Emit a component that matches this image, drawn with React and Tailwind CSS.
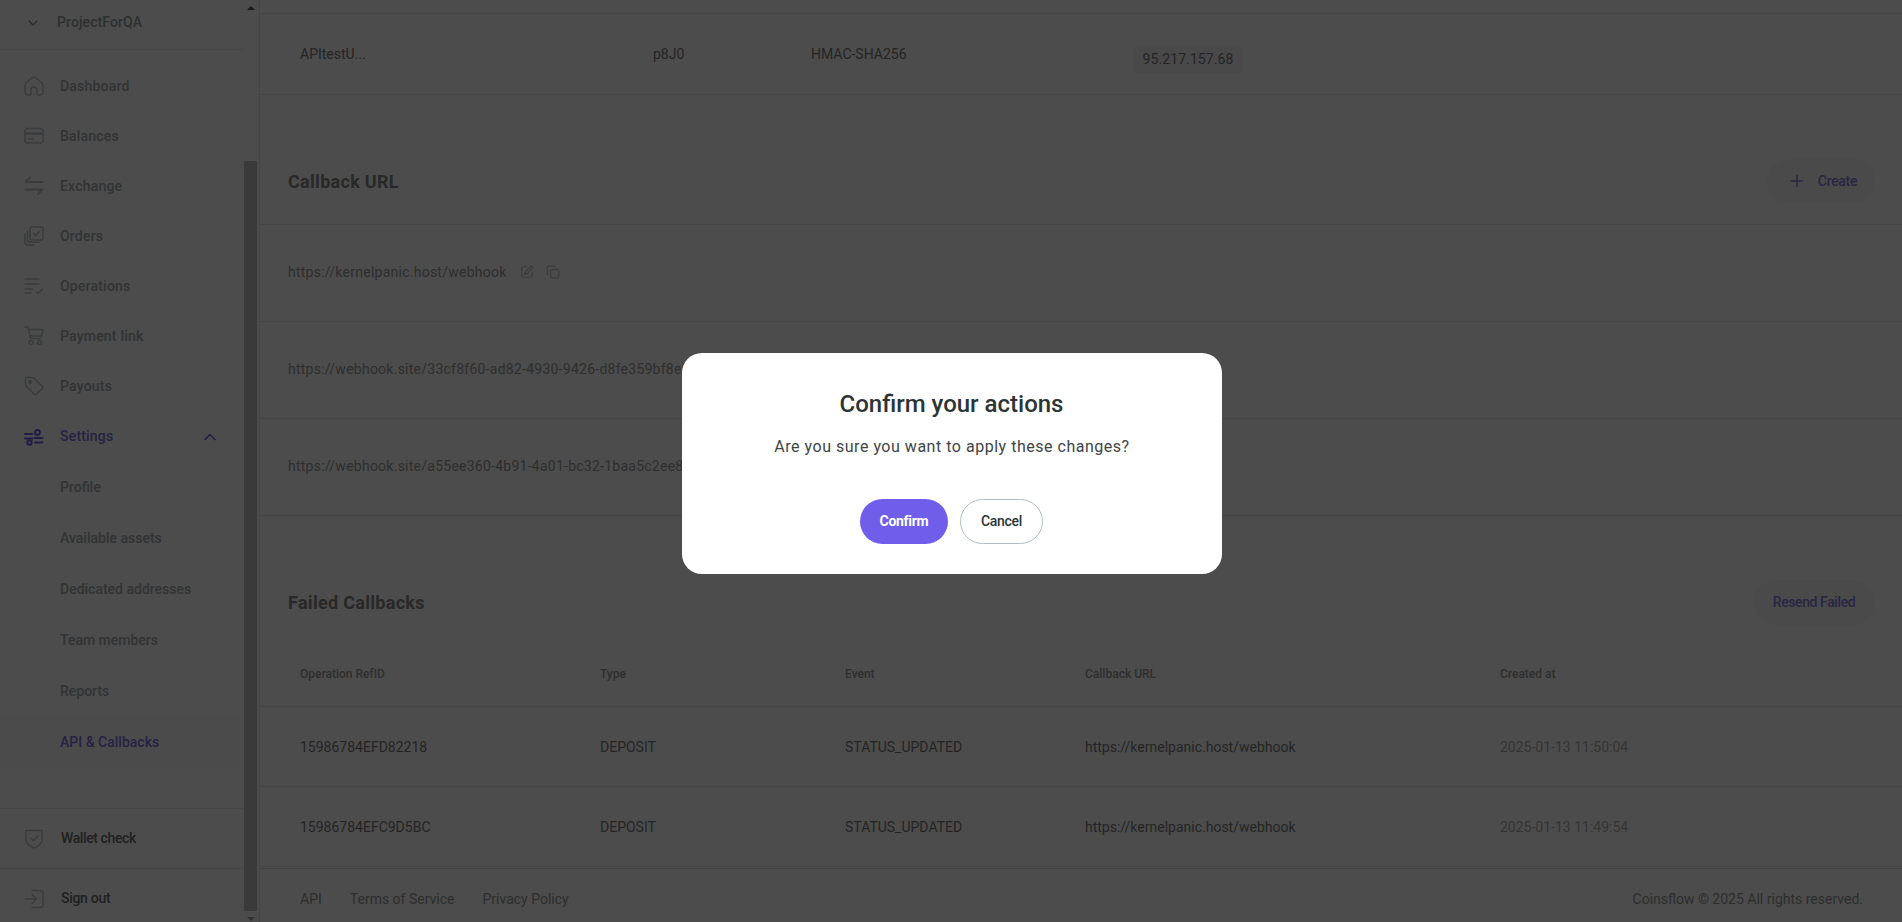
import React from "react";
import { ChevronDown, ChevronUp, Copy, Plus, SquarePen } from "lucide-react";

const stroke = { fill: "none", stroke: "currentColor", strokeWidth: 1.5, strokeLinecap: "round", strokeLinejoin: "round" };

const Icon = ({ children, w = 1.5 }) => (
  <svg width="20" height="20" viewBox="0 0 20 20" {...stroke} strokeWidth={w} className="shrink-0">
    {children}
  </svg>
);

const icons = {
  home: <Icon><path d="M1 9.5C1 8 1.8 7 3 6L7.5 2.2C9 1 11 1 12.5 2.2L17 6C18.2 7 19 8 19 9.5V15.5C19 17.5 17.5 19 15.5 19H14.5C13.5 19 13 18.5 13 17.5V14C13 12.3 11.7 11 10 11C8.3 11 7 12.3 7 14V17.5C7 18.5 6.5 19 5.5 19H4.5C2.5 19 1 17.5 1 15.5Z" /></Icon>,
  card: <Icon><rect x="1" y="2.5" width="18" height="14.5" rx="2.5" /><path d="M1 7.5H19" strokeWidth="2.5" /><path d="M4.5 13H9" /></Icon>,
  swap: <Icon w={1.8}><path d="M6 1.5L1.5 6H18.5" /><path d="M1.5 13.5H18.5L14 18" /></Icon>,
  orders: <Icon><rect x="6" y="1" width="13" height="13" rx="2" /><path d="M9.5 7.5L11.5 9.5L15.5 5.5" /><path d="M3.5 5V13.5C3.5 15 4.5 16.3 6 16.3H15" /><path d="M1 8V16C1 17.7 2.3 19 4 19H10" /></Icon>,
  list: <Icon><path d="M1 3H15" /><path d="M1 8H15" /><path d="M1 13H9" /><path d="M1 17H7" /><path d="M12 15.5L14 17.5L18.5 13" /></Icon>,
  cart: <Icon><path d="M0.5 1H3C3.8 1 4.3 1.5 4.5 2.2L6.5 12.5H17" /><path d="M4.8 3.5H19L17.5 10H6" /><circle cx="7" cy="16.5" r="2" /><circle cx="15.5" cy="16.5" r="2" /></Icon>,
  tag: <Icon><path d="M1.5 3.5C1.5 2.4 2.4 1.5 3.5 1.5H8.5C9.2 1.5 9.8 1.8 10.2 2.2L18 10C18.8 10.8 18.8 12 18 12.8L12.8 18C12 18.8 10.8 18.8 10 18L2.2 10.2C1.8 9.8 1.5 9.2 1.5 8.5Z" /><circle cx="6" cy="6" r="1.2" fill="currentColor" /></Icon>,
  sliders: <Icon w={2}><circle cx="13.5" cy="5.5" r="2.4" /><path d="M10.5 11H18.5" /><path d="M1 7H8.5" /><path d="M1 11.5H8.5" /><circle cx="5.5" cy="15.5" r="2.2" /><path d="M11 15.5H18.5" /></Icon>,
  shield: <Icon><path d="M2 1.5H18V11C18 15 13.5 17.5 10 19C6.5 17.5 2 15 2 11Z" /><path d="M6.5 9L9.3 11.8L14 7" /></Icon>,
  signout: <Icon><path d="M8 1.5H16C17.7 1.5 19 2.8 19 4.5V15.5C19 17.2 17.7 18.5 16 18.5H8" /><path d="M1 10H12" /><path d="M8 5.5L12.5 10L8 14.5" /></Icon>,
};

const navItems = [
  ["Dashboard", "home"],
  ["Balances", "card"],
  ["Exchange", "swap"],
  ["Orders", "orders"],
  ["Operations", "list"],
  ["Payment link", "cart"],
  ["Payouts", "tag"],
];

const subItems = ["Profile", "Available assets", "Dedicated addresses", "Team members", "Reports"];

const callbackUrls = [
  "https://kernelpanic.host/webhook",
  "https://webhook.site/33cf8f60-ad82-4930-9426-d8fe359bf8e9",
  "https://webhook.site/a55ee360-4b91-4a01-bc32-1baa5c2ee8d1",
];

const failed = [
  ["15986784EFD82218", "2025-01-13 11:50:04"],
  ["15986784EFC9D5BC", "2025-01-13 11:49:54"],
];

const failedCols = "grid grid-cols-[300px_245px_240px_415px_1fr] items-center pl-[40px]";

const Sidebar = () => (
  <aside className="w-[260px] shrink-0 flex border-r border-[#e8e8e8] h-full">
    <div className="w-[243px] shrink-0 flex flex-col h-full">
      <div className="h-[50px] shrink-0 flex items-center border-b border-[#e8e8e8] pl-[25px] pb-[4px] gap-[16px] text-[14px] font-medium tracking-[0.1px] text-[#989ea1]">
        <ChevronDown size={16} className="text-[#8a9094]" />
        <span>ProjectForQA</span>
      </div>
      <nav className="flex-1 pt-[11px]">
        {navItems.map(([label, icon]) => (
          <div key={label} className="h-[50px] flex items-center pl-[24px] gap-[16px] text-[14px] font-medium tracking-[0.2px] text-[#a6abae]">
            <span className="text-[#c0c5c8]">{icons[icon]}</span>
            {label}
          </div>
        ))}
        <div className="h-[51px] flex items-center pl-[24px] gap-[16px] text-[14px] font-medium tracking-[0.2px] text-[#8074e0]">
          <span className="text-[#6f5eea]">{icons.sliders}</span>
          <span className="flex-1">Settings</span>
          <ChevronUp size={20} className="mr-[23px] text-[#6f5eea]" />
        </div>
        {subItems.map((label) => (
          <div key={label} className="h-[51px] flex items-center pl-[60px] text-[14px] font-medium text-[#a6abae]">
            {label}
          </div>
        ))}
        <div className="h-[51px] flex items-center pl-[60px] text-[14px] font-medium text-[#8074e0] bg-[#fbfaff]">
          API &amp; Callbacks
        </div>
      </nav>
      <div className="h-[60px] shrink-0 flex items-center pl-[24px] gap-[17px] border-t border-[#e8e8e8] text-[14px] font-medium tracking-[-0.4px] text-[#6e6e6e]">
        <span className="text-[#c0c5c8]">{icons.shield}</span>
        Wallet check
      </div>
      <div className="h-[54px] shrink-0 flex items-center pl-[24px] pt-[6px] gap-[17px] border-t border-[#e8e8e8] text-[14px] font-medium tracking-[-0.3px] text-[#6e6e6e]">
        <span className="text-[#c0c5c8]">{icons.signout}</span>
        Sign out
      </div>
    </div>
    {/* window scrollbar of the side menu */}
    <div className="w-[15px] shrink-0 h-full flex flex-col items-center">
      <div className="h-[161px] shrink-0 pt-[6px]">
        <div className="w-0 h-0 border-x-[4px] border-x-transparent border-b-[4px] border-b-[#505050]" />
      </div>
      <div className="w-[13px] h-[750px] shrink-0 bg-[#c1c1c1]" />
      <div className="pt-[6px]">
        <div className="w-0 h-0 border-x-[4px] border-x-transparent border-t-[4px] border-t-[#a3a3a3]" />
      </div>
    </div>
  </aside>
);

const Main = () => (
  <main className="flex-1 min-w-0 flex flex-col h-full">
    <div className="flex-1 min-h-0 overflow-hidden">
      <div className="h-[14px] border-b border-[#e8e8e8]" />
      <div className="h-[81px] border-b border-[#e8e8e8] grid grid-cols-[353px_158px_322px_1fr] items-center pl-[40px] text-[14px] text-[#7a7a7a]">
        <span>APItestU...</span>
        <span>p8J0</span>
        <span>HMAC-SHA256</span>
        <span className="mt-[10px] w-[110px] h-[28px] flex items-center justify-center bg-[#f5f5f7] rounded-[6px] tracking-[0.1px]">95.217.157.68</span>
      </div>

      <div className="pt-[64px] pb-[21px] pl-[28px] pr-[27px] flex items-center justify-between border-b border-[#e8e8e8]">
        <h2 className="text-[18px] font-bold tracking-[0.3px] text-[#888888]">Callback URL</h2>
        <button className="h-[44px] w-[108px] pl-[2px] rounded-full bg-[#f8f8fb] flex items-center justify-center gap-[11px] text-[14px] font-medium tracking-[-0.3px] text-[#8a80d8]">
          <Plus size={20} strokeWidth={1.75} />
          Create
        </button>
      </div>
      {callbackUrls.map((url, i) => (
        <div key={url} className="h-[97px] border-b border-[#e8e8e8] flex items-center pl-[28px] pb-[2px] text-[14px] tracking-[0.25px] text-[#9a9a9a]">
          <span>{url}</span>
          {i === 0 && (
            <span className="flex items-center gap-[12px] ml-[13px] text-[#c4c4c4]">
              <SquarePen size={14} />
              <Copy size={14} />
            </span>
          )}
        </div>
      ))}

      <div className="mt-[64px] pl-[28px] pr-[27px] flex items-center justify-between">
        <h2 className="text-[18px] font-bold tracking-[0.3px] text-[#888888]">Failed Callbacks</h2>
        <button className="h-[45px] w-[122px] rounded-full bg-[#f8f8fb] text-[14px] font-medium tracking-[-0.4px] text-[#8a80d8]">
          Resend Failed
        </button>
      </div>
      <div className={`${failedCols} h-[82px] pt-[16px] border-b border-[#e8e8e8] text-[12px] font-medium text-[#9a9a9a]`}>
        <span>Operation RefID</span>
        <span>Type</span>
        <span>Event</span>
        <span>Callback URL</span>
        <span>Created at</span>
      </div>
      {failed.map(([ref, created]) => (
        <div key={ref} className={`${failedCols} h-[80px] pt-[2px] border-b border-[#e8e8e8] text-[14px] text-[#7a7a7a]`}>
          <span>{ref}</span>
          <span>DEPOSIT</span>
          <span>STATUS_UPDATED</span>
          <span>https://kernelpanic.host/webhook</span>
          <span className="text-[#b0b0b0]">{created}</span>
        </div>
      ))}
    </div>
    <footer className="h-[54px] shrink-0 border-t border-[#dcdcdc] flex items-center justify-between pl-[40px] pr-[39px] pt-[8px] text-[14px] text-[#999999]">
      <div className="flex gap-[28px]">
        <span>API</span>
        <span>Terms of Service</span>
        <span>Privacy Policy</span>
      </div>
      <span>Coinsflow © 2025 All rights reserved.</span>
    </footer>
  </main>
);

const ConfirmModal = () => (
  <div className="fixed inset-0 z-50 bg-black/70 flex items-center justify-center pt-[5px] pl-[2px]">
    <div className="w-[540px] h-[221px] bg-white rounded-[20px] flex flex-col items-center pt-[36px]">
      <h3 className="mr-[1px] text-[24px] leading-[30px] font-medium text-[#2d3436]">Confirm your actions</h3>
      <p className="mt-[16px] text-[16px] leading-[24px] tracking-[0.52px] text-[#3d4548]">Are you sure you want to apply these changes?</p>
      <div className="mt-[40px] mr-[2px] flex gap-[12px]">
        <button className="h-[45px] w-[88px] pl-[1px] rounded-full bg-[#6f5eea] text-white text-[14px] font-bold tracking-[-0.3px]">Confirm</button>
        <button className="h-[45px] w-[83px] pl-[1px] rounded-full border border-[#b2bec3] bg-white text-[#2d3436] text-[14px] font-medium tracking-[-0.3px]">Cancel</button>
      </div>
    </div>
  </div>
);

export default function App() {
  return (
    <div className="h-screen w-full flex overflow-hidden bg-white font-['Roboto',sans-serif]">
      <Sidebar />
      <Main />
      <ConfirmModal />
    </div>
  );
}
